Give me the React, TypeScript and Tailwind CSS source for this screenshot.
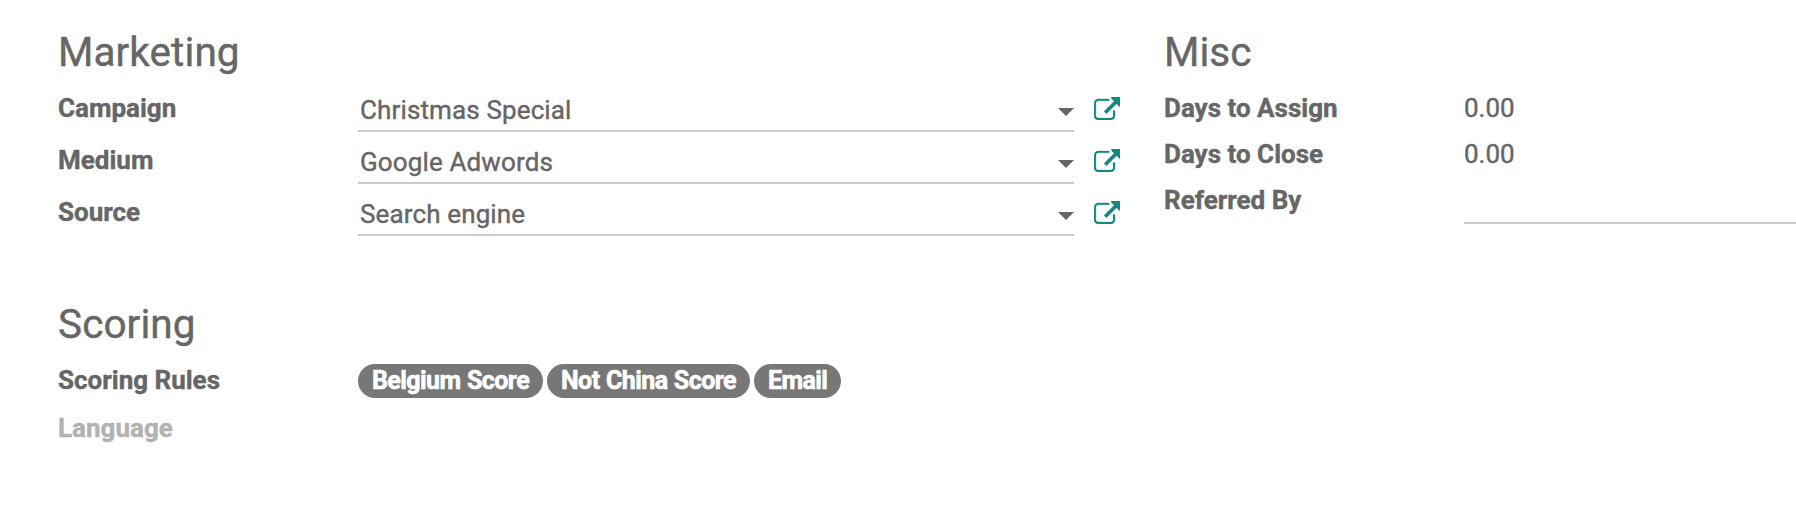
import type { ReactNode } from "react";

function ExternalLinkIcon() {
  return (
    <svg className="h-[23px] w-[26px]" viewBox="0 0 1740 1536" fill="currentColor" stroke="currentColor" strokeWidth="20" aria-hidden="true">
      <path d="M1408 928v320q0 119-84.500 203.500T1120 1536H288q-119 0-203.500-84.500T0 1248V416q0-119 84.500-203.500T288 128h704q14 0 23 9t9 23v64q0 14-9 23t-23 9H288q-66 0-113 47t-47 113v832q0 66 47 113t113 47h832q66 0 113-47t47-113V928q0-14 9-23t23-9h64q14 0 23 9t9 23zM1792 64v512q0 26-19 45t-45 19-45-19L1507 445 855 1097q-10 10-23 10t-23-10L695 983q-10-10-10-23t10-23L1347 285 1171 109q-19-19-19-45t19-45 45-19h512q26 0 45 19t19 45z" />
    </svg>
  );
}

function Heading({ children }: { children: ReactNode }) {
  return <h2 className="h-[59px] text-[40.5px] leading-[60px] font-normal tracking-[0.08px]">{children}</h2>;
}

function Label({ children, muted = false }: { children: ReactNode; muted?: boolean }) {
  return (
    <div className={muted ? "w-[300px] shrink-0 font-bold text-[#b2b2b2]" : "w-[300px] shrink-0 font-bold"}>
      {children}
    </div>
  );
}

function SelectRow({ label, value }: { label: string; value: string }) {
  return (
    <div className="flex h-[52px]">
      <Label>{label}</Label>
      <div className="flex h-[44px] w-[716px] items-start justify-between border-b-2 border-[#ccc] pt-[2px] pl-[2px]">
        <span className="tracking-[0.13px]">{value}</span>
        <svg className="mt-[18px] h-[8px] w-[16px]" viewBox="0 0 16 8" fill="currentColor" aria-hidden="true">
          <path d="M0 0h16L8 8z" />
        </svg>
      </div>
      <a className="mt-[9px] ml-[20px] text-[#138784]">
        <ExternalLinkIcon />
      </a>
    </div>
  );
}

function Badge({ children }: { children: ReactNode }) {
  return (
    <span className="h-[34px] rounded-full bg-[#777] px-[14px] text-[25px] leading-[34px] font-bold tracking-[-0.58px] [word-spacing:0.8px] whitespace-nowrap text-white [-webkit-text-stroke:0.6px]">
      {children}
    </span>
  );
}

export default function App() {
  return (
    <main className="h-[516px] overflow-hidden bg-white pt-[22px] pl-[58px] font-['Roboto',sans-serif] text-[26px] leading-[40px] text-[#666] [-webkit-text-stroke:0.4px]">
      <div className="flex h-[272px]">
        <section className="w-[1106px] shrink-0">
          <Heading>Marketing</Heading>
          <div className="pt-[7px]">
            <SelectRow label="Campaign" value="Christmas Special" />
            <SelectRow label="Medium" value="Google Adwords" />
            <SelectRow label="Source" value="Search engine" />
          </div>
        </section>
        <section className="grow">
          <Heading>Misc</Heading>
          <div className="pt-[7px]">
            <div className="flex h-[46px]">
              <Label>Days to Assign</Label>
              <span>0.00</span>
            </div>
            <div className="flex h-[46px]">
              <Label>Days to Close</Label>
              <span>0.00</span>
            </div>
            <div className="flex h-[46px]">
              <Label>Referred By</Label>
              <div className="h-[44px] grow border-b-2 border-[#ccc]" />
            </div>
          </div>
        </section>
      </div>
      <section>
        <Heading>Scoring</Heading>
        <div className="pt-[7px]">
          <div className="flex h-[48px]">
            <Label>Scoring Rules</Label>
            <div className="flex gap-[4px] pt-[4px]">
              <Badge>Belgium Score</Badge>
              <Badge>Not China Score</Badge>
              <Badge>Email</Badge>
            </div>
          </div>
          <Label muted>Language</Label>
        </div>
      </section>
    </main>
  );
}
